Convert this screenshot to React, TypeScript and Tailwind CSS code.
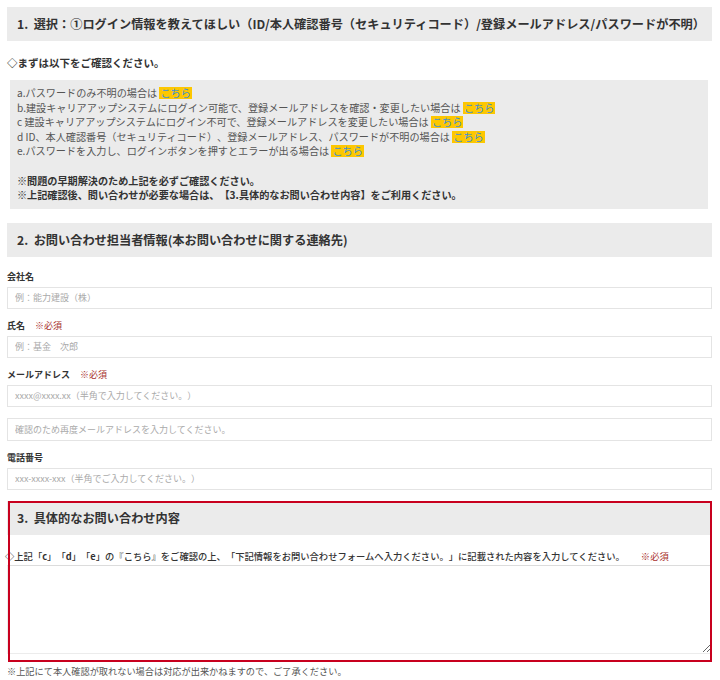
import React from 'react'

const Kochira = () => (
  <span className="inline-block bg-[#fdc700] px-[1px] leading-[12px] text-[#3d8fd6]">こちら</span>
)

const Required = () => <span className="ml-[10px] text-[#a8302c] font-normal">※必須</span>

const SectionHeader = ({ children }: { children: React.ReactNode }) => (
  <div className="flex h-[34px] items-center bg-[#ebebeb] pl-[10px] text-[12.2px] font-bold text-[#333]">
    {children}
  </div>
)

const Field = ({ label, required, placeholder, first }: { label: string; required?: boolean; placeholder: string; first?: boolean }) => (
  <div className={first ? 'mt-[13px]' : 'mt-[10px]'}>
    <div className="mb-[3px] flex h-[14px] items-center text-[9px] font-bold text-[#333]">
      {label}
      {required && <Required />}
    </div>
    <input
      type="text"
      placeholder={placeholder}
      className="block h-[22px] w-full border border-[#e4e4e4] bg-white px-[7px] text-[9px] text-[#333] placeholder-[#aaa] outline-none"
    />
  </div>
)

export default function App() {
  return (
    <div
      className="min-h-screen w-[720px] bg-white pl-[7px] pr-[8px] pt-[7px] text-[#444] [text-spacing-trim:space-all]"
      style={{ fontFamily: '"Noto Sans CJK JP", "Noto Sans", sans-serif' }}
    >
      <SectionHeader>1.&nbsp;&nbsp;選択：①ログイン情報を教えてほしい（ID/本人確認番号（セキュリティコード）/登録メールアドレス/パスワードが不明）</SectionHeader>

      <p className="mt-[14px] text-[10.5px] font-bold leading-[16px] text-[#333]">◇まずは以下をご確認ください。</p>

      <div className="ml-[3px] mr-[4px] mt-[9px] bg-[#ebebeb] pb-[6px] pl-[7px] pt-[6px] text-[10.15px] leading-[14.6px] text-[#555]">
        <p>a.パスワードのみ不明の場合は <Kochira /></p>
        <p>b.建設キャリアアップシステムにログイン可能で、登録メールアドレスを確認・変更したい場合は <Kochira /></p>
        <p>c 建設キャリアアップシステムにログイン不可で、登録メールアドレスを変更したい場合は <Kochira /></p>
        <p>d ID、本人確認番号（セキュリティコード）、登録メールアドレス、パスワードが不明の場合は <Kochira /></p>
        <p>e.パスワードを入力し、ログインボタンを押すとエラーが出る場合は <Kochira /></p>
        <p className="h-[14.6px]"></p>
        <p className="font-bold text-[#333]">※問題の早期解決のため上記を必ずご確認ください。</p>
        <p className="font-bold text-[#333]">※上記確認後、問い合わせが必要な場合は、【3.具体的なお問い合わせ内容】をご利用ください。</p>
      </div>

      <div className="mt-[14px]">
        <SectionHeader>2.&nbsp;&nbsp;お問い合わせ担当者情報(本お問い合わせに関する連絡先)</SectionHeader>
      </div>

      <Field first label="会社名" placeholder="例：能力建設（株）" />
      <Field label="氏名" required placeholder="例：基金　次郎" />
      <Field label="メールアドレス" required placeholder="xxxx@xxxx.xx（半角で入力してください。）" />
      <input
        type="text"
        placeholder="確認のため再度メールアドレスを入力してください。"
        className="mt-[11px] block h-[23px] w-full border border-[#e4e4e4] bg-white px-[7px] text-[9px] text-[#333] placeholder-[#aaa] outline-none"
      />
      <Field label="電話番号" placeholder="xxx-xxxx-xxx（半角でご入力してください。）" />

      <div className="relative mt-[11px] pb-[8px]">
        <div className="mt-[2px]">
          <SectionHeader>3.&nbsp;&nbsp;具体的なお問い合わせ内容</SectionHeader>
        </div>
        <p className="-ml-[2px] mt-[14px] whitespace-nowrap text-[9.3px] font-medium leading-[14px] text-[#333]">
          ◇上記「<b>c</b>」「<b>d</b>」「<b>e</b>」の『こちら』をご確認の上、「下記情報をお問い合わせフォームへ入力ください。」に記載された内容を入力してください。
          <span className="ml-[16px] font-normal text-[#a8302c]">※必須</span>
        </p>
        <textarea className="mt-[2px] block h-[89px] w-full resize-y border border-[#ececec] border-t-[#dcdcdc] bg-white outline-none"></textarea>
        <div className="pointer-events-none absolute bottom-0 left-[1px] right-0 top-0 border-2 border-[#c8001e]"></div>
      </div>

      <p className="mt-[2px] text-[9.2px] leading-[14px] text-[#555]">※上記にて本人確認が取れない場合は対応が出来かねますので、ご了承ください。</p>
    </div>
  )
}
